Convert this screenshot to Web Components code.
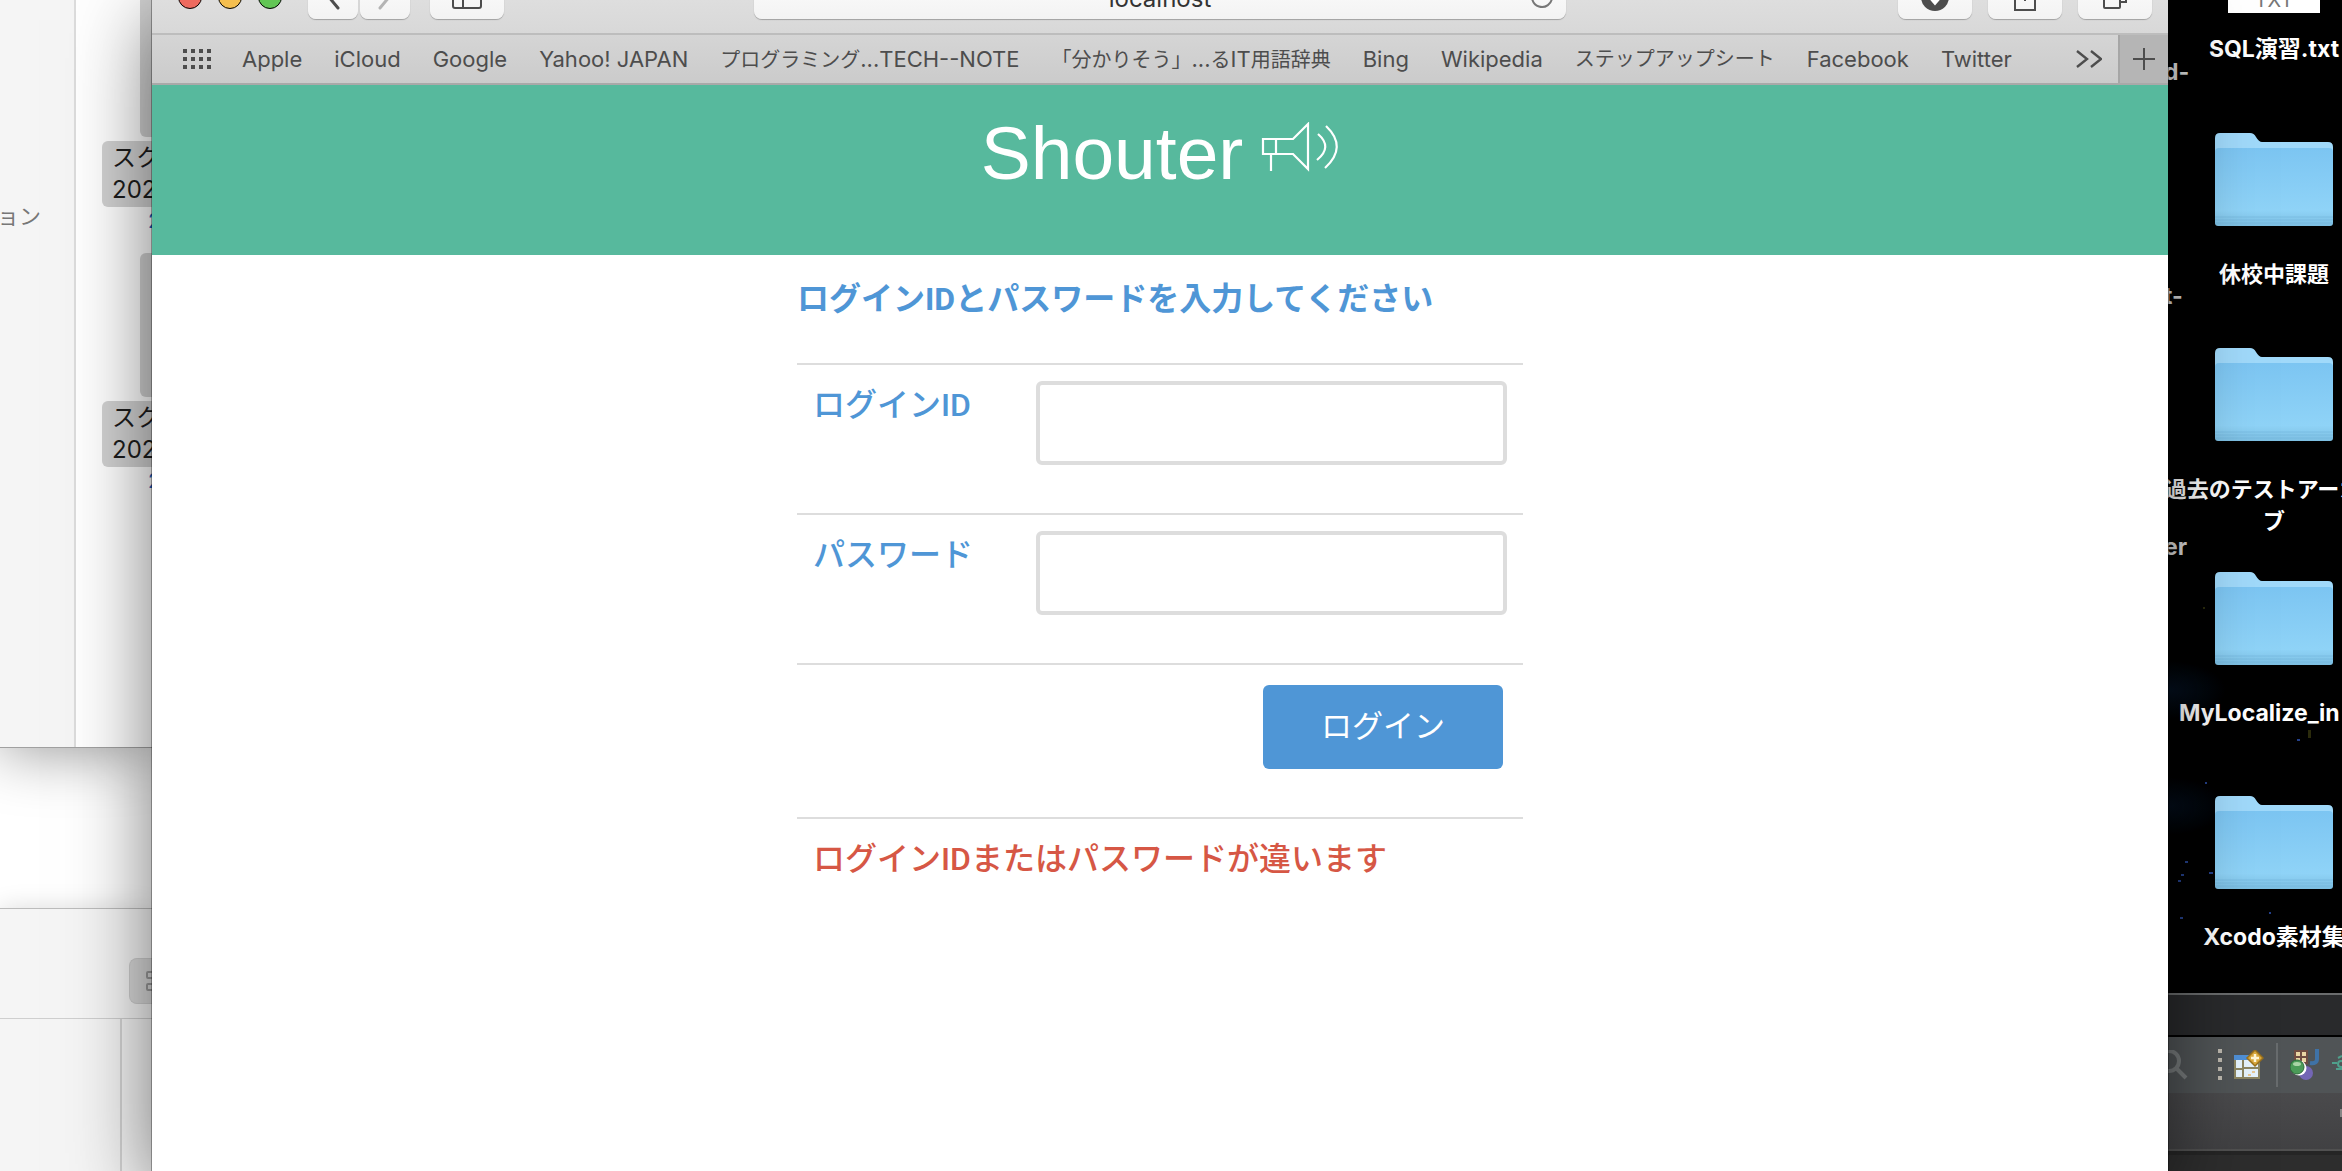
<!DOCTYPE html>
<html lang="ja">
<head>
<meta charset="utf-8">
<title>Shouter</title>
<style>
  :root {
    --font-ui: Inter, "Noto Sans CJK JP", sans-serif;
    --font-page: Roboto, "Noto Sans CJK JP", sans-serif;
    --font-brand: "Liberation Sans", sans-serif;
    --color-brand: #57b99d;
    --color-primary: #4f96d6;
    --color-danger: #d65745;
    --color-line: #dddddd;
  }

  body {
    margin: 0;
    background: #000;
    font-family: var(--font-ui);
  }
</style>
</head>
<body>
<desktop-screen>
  <finder-window slot="left"></finder-window>
  <browser-window>
    <bookmark-bar slot="bookmarks">
      <bookmark-link>Apple</bookmark-link>
      <bookmark-link>iCloud</bookmark-link>
      <bookmark-link>Google</bookmark-link>
      <bookmark-link>Yahoo! JAPAN</bookmark-link>
      <bookmark-link wide>プログラミング<span>...TECH--NOTE</span></bookmark-link>
      <bookmark-link wide>「分かりそう」<span>...</span>る<span>IT</span>用語辞典</bookmark-link>
      <bookmark-link>Bing</bookmark-link>
      <bookmark-link>Wikipedia</bookmark-link>
      <bookmark-link wide>ステップアップシート</bookmark-link>
      <bookmark-link>Facebook</bookmark-link>
      <bookmark-link>Twitter</bookmark-link>
    </bookmark-bar>
    <shouter-header>Shouter</shouter-header>
    <login-form>
      <span slot="title">ログインIDとパスワードを入力してください</span>
      <form-row type="text" name="loginId">ログインID</form-row>
      <form-row type="password" name="password">パスワード</form-row>
      <span slot="submit">ログイン</span>
      <span slot="error">ログインIDまたはパスワードが違います</span>
    </login-form>
  </browser-window>
  <desktop-icons slot="right"></desktop-icons>
</desktop-screen>

<script>
// Attaches an open shadow root and fills it with the given markup
class BaseElement extends HTMLElement {
  constructor() {
    super();
    const template = document.createElement('template');
    template.innerHTML = this.constructor.markup;
    this.attachShadow({ mode: 'open' });
    this.shadowRoot.appendChild(template.content.cloneNode(true));
  }
}

class DesktopScreen extends BaseElement {
  static markup = `
    <style>
      :host {
        display: grid;
        grid-template-columns: 152px minmax(0, 1fr) 174px;
        min-height: 100vh;
        overflow: hidden;
      }
    </style>
    <slot name="left"></slot>
    <slot></slot>
    <slot name="right"></slot>
  `;
}

/* ---------- Left: windows behind the browser ---------- */

class FinderFile extends BaseElement {
  static markup = `
    <style>
      :host {
        display: flex;
        flex-direction: column;
        padding-left: 26px;
        font-size: 24px;
        line-height: 32px;
        color: #1c1c1c;
        white-space: nowrap;
      }
      .thumb {
        height: 144px;
        margin-left: 38px;
        border-radius: 6px 0 0 6px;
        background: #d2d2d2;
      }
      .name {
        margin-top: 4px;
        padding: 1px 0 1px 10px;
        border-radius: 6px 0 0 6px;
        background: #d2d2d2;
      }
      .name span { display: block; }
      .meta {
        height: 46px;
        padding-left: 46px;
        font-size: 20px;
        line-height: 28px;
        color: #2660c0;
      }
    </style>
    <div class="thumb"></div>
    <div class="name"><span>スク</span><span>202</span></div>
    <div class="meta">2</div>
  `;
}

class FinderWindow extends BaseElement {
  static markup = `
    <style>
      :host {
        display: flex;
        flex-direction: column;
        overflow: hidden;
        background: #fff;
      }
      .window {
        display: grid;
        grid-template-columns: 76px minmax(0, 1fr);
        height: 747px;
        background: #fff;
        border-bottom: 1px solid #a0a0a0;
        box-shadow: 0 4px 60px rgba(0, 0, 0, .4);
        z-index: 1;
      }
      aside {
        display: flex;
        justify-content: flex-end;
        padding: 200px 33px 0 0;
        background: #f5f5f5;
        border-right: 2px solid #dcdcdc;
        font-size: 22px;
        line-height: 32px;
        color: #777;
        white-space: nowrap;
      }
      .files { margin-top: -7px; overflow: hidden; }
      .gap { flex: 1; background: #fff; }
      .second {
        display: flex;
        flex-direction: column;
        background: #f5f5f5;
        border-top: 1px solid #bcbcbc;
        box-shadow: 0 0 24px rgba(0, 0, 0, .14);
        z-index: 1;
      }
      .bar {
        display: flex;
        justify-content: flex-end;
        padding: 49px 0 14px;
        border-bottom: 1px solid #cfcfcf;
      }
      button {
        width: 23px;
        height: 46px;
        padding: 0;
        border: 1px solid #cfcfcf;
        border-right: 0;
        border-radius: 8px 0 0 8px;
        background: #dadada;
        display: flex;
        align-items: center;
        justify-content: flex-end;
      }
      .pane { height: 152px; margin-left: 120px; border-left: 2px solid #d4d4d4; }
    </style>
    <div class="window">
      <aside>ョン</aside>
      <div class="files"><finder-file></finder-file><finder-file></finder-file></div>
    </div>
    <div class="gap"></div>
    <div class="second">
      <div class="bar">
        <button type="button" aria-label="Icon view">
          <svg width="6" height="22" viewBox="0 0 6 22" fill="none" stroke="#9b9b9b" stroke-width="2"><rect x="1" y="2" width="8" height="6" rx="1"/><rect x="1" y="14" width="8" height="6" rx="1"/></svg>
        </button>
      </div>
      <div class="pane"></div>
    </div>
  `;
}

/* ---------- Browser ---------- */

class BrowserWindow extends BaseElement {
  static markup = `
    <style>
      :host {
        display: flex;
        flex-direction: column;
        position: relative;
        z-index: 2;
        background: #fff;
        box-shadow: 0 0 0 1px rgba(0, 0, 0, .3), 0 20px 76px rgba(0, 0, 0, .55);
      }
      .toolbar {
        height: 33px;
        overflow: hidden;
        background: linear-gradient(#dedede, #d8d8d8);
        border-bottom: 2px solid #bdbdbd;
      }
      .row {
        display: grid;
        grid-template-columns: minmax(0, 1fr) minmax(0, 812px) minmax(0, 1fr);
        align-items: center;
        height: 44px;
        margin-top: -25px;
      }
      .group { display: flex; align-items: center; }
      .lights { display: flex; gap: 16px; padding: 0 26px; }
      .lights i { width: 22px; height: 22px; border-radius: 50%; border: 1px solid; }
      .red { background: #ee6a5f; border-color: #d8574c; }
      .amber { background: #f5bf4f; border-color: #dca43a; }
      .green { background: #62c655; border-color: #4cab40; }
      button {
        display: flex;
        align-items: center;
        justify-content: center;
        width: 74px;
        height: 44px;
        padding: 0;
        border: 0;
        border-radius: 8px;
        background: linear-gradient(#fdfdfd, #f3f3f3);
        box-shadow: 0 1px 1px #a0a0a0;
        color: #4d4d4d;
      }
      button.nav { width: 50px; margin-right: 2px; }
      button.side { margin-left: 18px; }
      .address {
        display: grid;
        align-items: center;
        height: 44px;
        border-radius: 8px;
        background: linear-gradient(#fdfdfd, #f3f3f3);
        box-shadow: 0 1px 1px #a0a0a0;
      }
      .address input, .address svg { grid-area: 1 / 1; }
      .address svg { justify-self: end; margin-right: 12px; }
      input {
        width: 100%;
        box-sizing: border-box;
        border: 0;
        padding: 4px 0 0;
        background: none;
        font: 24px/32px var(--font-ui);
        text-align: center;
        color: #333;
      }
      .actions { justify-content: flex-end; gap: 16px; padding-right: 16px; }
    </style>
    <div class="toolbar">
      <div class="row">
        <div class="group">
          <div class="lights"><i class="red"></i><i class="amber"></i><i class="green"></i></div>
          <button type="button" class="nav" aria-label="Back">
            <svg width="24" height="28" viewBox="0 0 24 28" fill="none" stroke="currentColor" stroke-width="3" stroke-linecap="round"><path d="M17 2 7 13l10 12"/></svg>
          </button>
          <button type="button" class="nav" aria-label="Forward">
            <svg width="24" height="28" viewBox="0 0 24 28" fill="none" stroke="#b4b4b4" stroke-width="3" stroke-linecap="round"><path d="m7 2 10 11L7 25"/></svg>
          </button>
          <button type="button" class="side" aria-label="Sidebar">
            <svg width="30" height="24" viewBox="0 0 30 24" fill="none" stroke="currentColor" stroke-width="2"><rect x="1" y="1" width="28" height="22" rx="2"/><path d="M11 1v22M4 6h4M4 10h4M4 14h4"/></svg>
          </button>
        </div>
        <div class="address">
          <input type="text" value="localhost" aria-label="Address">
          <svg width="24" height="24" viewBox="0 0 24 24" fill="none" stroke="#777" stroke-width="2"><path d="M20 6a10 10 0 1 0 2 6"/><path d="M20 1v6h-6"/></svg>
        </div>
        <div class="group actions">
          <button type="button" aria-label="Downloads">
            <svg width="28" height="28" viewBox="0 0 28 28"><circle cx="14" cy="14" r="14" fill="currentColor"/><path d="M14 6v14M8 14l6 7 6-7" fill="#fff" stroke="#fff" stroke-width="2"/></svg>
          </button>
          <button type="button" aria-label="Share">
            <svg width="24" height="30" viewBox="0 0 24 30" fill="none" stroke="currentColor" stroke-width="2"><path d="M8 8H2v20h20V8h-6M12 19V1M6 6l6-5 6 5"/></svg>
          </button>
          <button type="button" aria-label="Tabs">
            <svg width="26" height="26" viewBox="0 0 26 26" fill="none" stroke="currentColor" stroke-width="2"><rect x="2" y="8" width="16" height="16" rx="1"/><path d="M8 8V2h16v16h-5"/></svg>
          </button>
        </div>
      </div>
    </div>
    <slot name="bookmarks"></slot>
    <slot></slot>
  `;
}

class BookmarkBar extends BaseElement {
  static markup = `
    <style>
      :host {
        display: flex;
        align-items: center;
        height: 48px;
        padding-left: 31px;
        background: linear-gradient(#d5d5d5, #cbcbcb);
        border-bottom: 2px solid #a9a9a9;
        color: #4d4d4d;
      }
      nav {
        display: flex;
        flex: 1;
        gap: 32px;
        min-width: 0;
        margin-left: 31px;
        white-space: nowrap;
      }
      button {
        display: flex;
        align-items: center;
        justify-content: center;
        padding: 0;
        border: 0;
        background: none;
        color: inherit;
      }
      .add {
        width: 50px;
        height: 48px;
        margin-left: 16px;
        background: #b5b5b5;
        border-left: 2px solid #a6a6a6;
      }
    </style>
    <button type="button" aria-label="Favorites">
      <svg width="28" height="20" viewBox="0 0 28 20" fill="currentColor"><path d="M0 0h4v4H0zM8 0h4v4H8zM16 0h4v4h-4zM24 0h4v4h-4zM0 8h4v4H0zM8 8h4v4H8zM16 8h4v4h-4zM24 8h4v4h-4zM0 16h4v4H0zM8 16h4v4H8zM16 16h4v4h-4zM24 16h4v4h-4z"/></svg>
    </button>
    <nav><slot></slot></nav>
    <button type="button" aria-label="More bookmarks">
      <svg width="26" height="18" viewBox="0 0 26 18" fill="none" stroke="currentColor" stroke-width="2.4"><path d="m1 1 10 8-10 8M15 1l10 8-10 8"/></svg>
    </button>
    <button type="button" class="add" aria-label="New tab">
      <svg width="22" height="22" viewBox="0 0 22 22" stroke="currentColor" stroke-width="2"><path d="M11 0v22M0 11h22"/></svg>
    </button>
  `;
}

class BookmarkLink extends BaseElement {
  static markup = `
    <style>
      :host { display: block; font-size: 22px; line-height: 32px; }
      /* Kanji and kana are set a size smaller than the Latin text beside them */
      :host([wide]) { font-size: 20px; }
      ::slotted(span) { font-size: 22px; }
      a { color: inherit; text-decoration: none; }
    </style>
    <a href="#"><slot></slot></a>
  `;
}

/* ---------- Shouter page ---------- */

class ShouterHeader extends BaseElement {
  static markup = `
    <style>
      :host {
        display: block;
        background: var(--color-brand);
        color: #fff;
      }
      h1 {
        display: flex;
        justify-content: center;
        gap: 18px;
        height: 144px;
        margin: 0;
        padding-top: 26px;
        font: 75px/84px var(--font-brand);
      }
      svg { margin-top: 11px; }
    </style>
    <h1>
      <slot></slot>
      <svg width="78" height="50" viewBox="0 0 78 50" fill="none" stroke="#fff" stroke-width="2.2" aria-hidden="true">
        <path d="M2 17h30L47 2v45L32 32H2zM15 17v15M10 32v17"/>
        <path d="M57 12q15 13-1 26"/>
        <path d="M65 4q22 21-1 42"/>
      </svg>
    </h1>
  `;
}

class LoginForm extends BaseElement {
  static markup = `
    <style>
      :host {
        display: block;
        width: 100%;
        max-width: 726px;
        margin: 0 auto;
        font-family: var(--font-page);
        font-size: 32px;
        line-height: 48px;
      }
      h2 {
        margin: 0;
        padding: 20px 0 40px;
        font-size: 32px;
        font-weight: 700;
        color: var(--color-primary);
      }
      .submit {
        display: flex;
        justify-content: flex-end;
        padding: 20px 20px 48px;
        border-top: 2px solid var(--color-line);
      }
      button {
        width: 240px;
        height: 84px;
        border: 0;
        border-radius: 6px;
        background: var(--color-primary);
        color: #fff;
        font: 31px/48px var(--font-page);
      }
      .error {
        margin: 0;
        padding: 16px;
        border-top: 2px solid var(--color-line);
        color: var(--color-danger);
        font-weight: 500;
      }
    </style>
    <form>
      <h2><slot name="title"></slot></h2>
      <slot></slot>
      <div class="submit"><button type="button"><slot name="submit"></slot></button></div>
      <p class="error"><slot name="error"></slot></p>
    </form>
  `;
}

class FormRow extends BaseElement {
  static markup = `
    <style>
      :host {
        display: flex;
        justify-content: space-between;
        align-items: flex-start;
        padding: 16px 16px 48px;
        border-top: 2px solid var(--color-line);
      }
      label { color: var(--color-primary); font-weight: 500; }
      input {
        box-sizing: border-box;
        width: 471px;
        height: 84px;
        padding: 0 16px;
        border: 4px solid var(--color-line);
        border-radius: 6px;
        background: #fff;
        font: inherit;
      }
    </style>
    <label for="field"><slot></slot></label>
    <input id="field">
  `;

  connectedCallback() {
    const input = this.shadowRoot.getElementById('field');
    input.type = this.getAttribute('type');
    input.name = this.getAttribute('name');
  }
}

/* ---------- Right: desktop and the IDE window ---------- */

class FolderIcon extends BaseElement {
  static markup = `
    <style>
      :host {
        display: flex;
        flex-direction: column;
        align-items: center;
        height: 224px;
        gap: 31px;
        text-align: center;
      }
      :host([start]) .name { align-self: flex-start; margin-left: 11px; }
      :host([latin]) { font-size: 23px; }
      :host([first]) { height: 215px; }
      :host([last]) { height: 184px; }
      svg { flex: none; }
      .name { white-space: nowrap; }
    </style>
    <svg width="118" height="94" viewBox="0 0 118 94">
      <defs>
        <linearGradient id="front" x1="0" y1="0" x2="0" y2="1">
          <stop offset="0" stop-color="#7cc5f2"/>
          <stop offset=".8" stop-color="#8fd3f7"/>
          <stop offset="1" stop-color="#7dbfe2"/>
        </linearGradient>
      </defs>
      <path d="M0 5q0-5 5-5h30q4 0 6 4 3 5 6 5h66q5 0 5 5v20H0z" fill="#a0d9fa"/>
      <path d="M0 19q0-4 4-4h110q4 0 4 4v71q0 3-3 3H3q-3 0-3-3z" fill="url(#front)"/>
      <path d="M0 84h118M0 87h118M0 90h118" stroke="#6fb2d8" stroke-width="1" opacity=".5"/>
    </svg>
    <div class="name"><slot></slot></div>
  `;
}

class IdeWindow extends BaseElement {
  static markup = `
    <style>
      :host {
        display: block;
        flex: none;
        overflow: hidden;
        background: #2d2d2d;
        border-top: 2px solid #6a6c6d;
      }
      .title { height: 40px; background: #292a2c; border-bottom: 2px solid #000; }
      .tools {
        display: flex;
        align-items: center;
        height: 56px;
        background: #505456;
      }
      .tools svg { flex: none; }
      .dots { margin-left: 30px; }
      .new { margin-left: 12px; }
      .sep { flex: none; width: 2px; height: 44px; margin: 0 12px; background: #686c6e; }
      .link { margin-left: 12px; }
      .tabs {
        display: flex;
        justify-content: flex-end;
        height: 40px;
        padding-top: 16px;
        background: linear-gradient(#4a4a4c, #414143);
        border-bottom: 2px solid #505050;
      }
      .tabs i { width: 2px; height: 8px; background: #858585; }
      .body { height: 16px; border-top: 4px solid #252525; }
    </style>
    <div class="title"></div>
    <div class="tools">
      <svg width="20" height="30" viewBox="0 0 20 30" fill="none" stroke="#777b7c" stroke-width="4"><circle cx="1" cy="11" r="10"/><path d="m8 18 10 10"/></svg>
      <svg class="dots" width="4" height="32" viewBox="0 0 4 32" fill="#bdb8ae"><path d="M0 0h4v4H0zM0 9h4v4H0zM0 18h4v4H0zM0 27h4v4H0z"/></svg>
      <svg class="new" width="30" height="30" viewBox="0 0 30 30">
        <path d="M1 8h24v20H1z" fill="#e4f2fb" stroke="#8b8561" stroke-width="2"/>
        <path d="M0 5h24v5H0z" fill="#4f8fd6"/>
        <path d="M9 10v18M9 18h16M1 19h8" stroke="#8b8561" stroke-width="2"/>
        <path d="m21 0 8 8-8 8-8-8z" fill="#d9a83c" stroke="#99701c" stroke-width="1.5"/>
        <path d="M21 4v8M17 8h8" stroke="#fff6d5" stroke-width="2.5"/>
        <path d="M14 25h3M18 22h3" stroke="#e6c894" stroke-width="2"/>
      </svg>
      <span class="sep"></span>
      <svg width="30" height="32" viewBox="0 0 30 32">
        <path d="M4 1h14v14H4z" fill="#704c42"/>
        <path d="M6 3h4v4H6zM12 3h4v4h-4zM6 9h4v4H6zM12 9h4v4h-4z" fill="#ead5a4"/>
        <path d="M27 0v10q0 5-7 4" fill="none" stroke="#3f72a6" stroke-width="4"/>
        <circle cx="16" cy="24" r="7" fill="#7366b5"/>
        <circle cx="9" cy="19" r="7.5" fill="#fff"/>
        <circle cx="7" cy="18" r="7" fill="#4b9b58" stroke="#2c6b38" stroke-width="1"/>
        <ellipse cx="7" cy="15" rx="4" ry="2" fill="#a9d4a6"/>
      </svg>
      <svg class="link" width="10" height="20" viewBox="0 0 10 20" fill="none" stroke="#4fa08c" stroke-width="2"><path d="M0 8h5M4 14h6M6 3l4-2"/><circle cx="9" cy="9" r="3"/></svg>
    </div>
    <div class="tabs"><i></i></div>
    <div class="body"></div>
  `;
}

class DesktopIcons extends BaseElement {
  static markup = `
    <style>
      :host {
        display: flex;
        flex-direction: column;
        position: relative;
        overflow: hidden;
        background: radial-gradient(ellipse 60px 30px at 0 690px, #04101f, transparent),
          radial-gradient(ellipse 60px 30px at 0 806px, #030d1a, transparent), #000;
        color: #fff;
        font-size: 22px;
        font-weight: 700;
        line-height: 32px;
      }
      /* The icon column is wider than the visible strip and runs off its right side */
      .icons { flex: 1; margin-right: -38px; }
      .doc {
        display: flex;
        flex-direction: column;
        align-items: center;
        height: 133px;
        font-size: 23px;
        white-space: nowrap;
      }
      .sheet {
        width: 92px;
        height: 13px;
        margin-bottom: 20px;
        overflow: hidden;
        background: #fff;
        color: #777;
        font-size: 20px;
        font-weight: 400;
        line-height: 0;
        text-align: center;
      }
      ul { margin: 0; padding: 0; list-style: none; }
      /* Ends of the names whose icons sit under the browser window */
      li { position: absolute; left: -4px; font-size: 23px; color: #ddd; }
      li:nth-child(1) { top: 56px; }
      li:nth-child(2) { top: 280px; }
      li:nth-child(3) { top: 531px; }
      .stars { position: absolute; left: 0; top: 380px; }
    </style>
    <svg class="stars" width="174" height="600" viewBox="0 0 174 600" fill="#24408a" aria-hidden="true">
      <path d="M17 481h3v2h-3zM13 494h3v2h-3zM10 500h3v2h-3zM41 492h4v2h-4zM12 537h3v2h-3zM129 359h3v2h-3zM37 402h2v2h-2zM101 532h2v2h-2z"/>
      <path d="M35 227h2v2h-2zM140 350h3v8h-3z" fill="#2b2b0c"/>
    </svg>
    <ul>
      <li>d-</li>
      <li>t-</li>
      <li>er</li>
    </ul>
    <div class="icons">
      <div class="doc"><div class="sheet">TXT</div>SQL演習.txt</div>
      <folder-icon first>休校中課題</folder-icon>
      <folder-icon>過去のテストアーカイ<br>ブ</folder-icon>
      <folder-icon start latin>MyLocalize_in</folder-icon>
      <folder-icon last latin>Xcodo素材集</folder-icon>
    </div>
    <ide-window></ide-window>
  `;
}

customElements.define('desktop-screen', DesktopScreen);
customElements.define('finder-file', FinderFile);
customElements.define('finder-window', FinderWindow);
customElements.define('browser-window', BrowserWindow);
customElements.define('bookmark-bar', BookmarkBar);
customElements.define('bookmark-link', BookmarkLink);
customElements.define('shouter-header', ShouterHeader);
customElements.define('login-form', LoginForm);
customElements.define('form-row', FormRow);
customElements.define('folder-icon', FolderIcon);
customElements.define('ide-window', IdeWindow);
customElements.define('desktop-icons', DesktopIcons);
</script>
</body>
</html>
